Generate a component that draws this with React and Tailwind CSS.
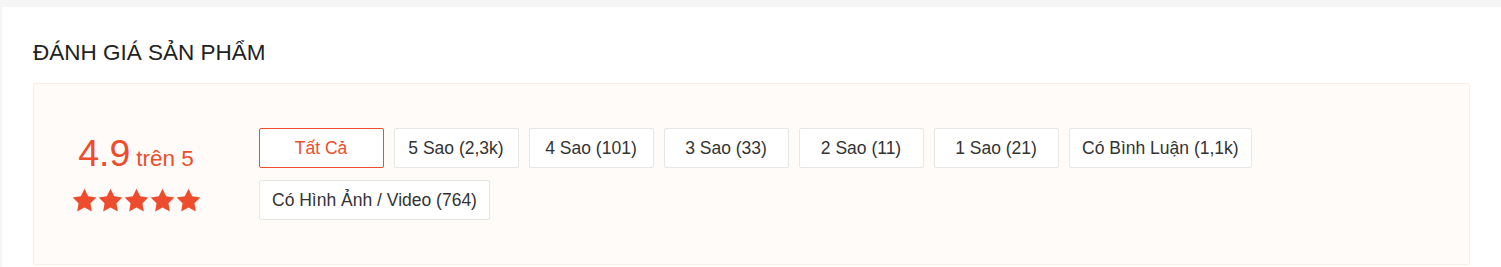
import React from 'react'

const filters = [
  { label: 'Tất Cả', active: true },
  { label: '5 Sao (2,3k)' },
  { label: '4 Sao (101)' },
  { label: '3 Sao (33)' },
  { label: '2 Sao (11)' },
  { label: '1 Sao (21)' },
  { label: 'Có Bình Luận (1,1k)' },
  { label: 'Có Hình Ảnh / Video (764)' },
]

function Star() {
  return (
    <svg viewBox="0 0 24 24" className="w-[25px] h-[25px] block" fill="#ee4d2d">
      <polygon points="12 0.8 15.53 7.95 23.41 9.09 17.71 14.65 19.05 22.51 12 18.8 4.95 22.51 6.29 14.65 0.59 9.09 8.47 7.95" />
    </svg>
  )
}

function App() {
  return (
    <div className="h-[267px] overflow-hidden bg-[#f5f5f5] pt-[7px] pl-[2px] font-['Liberation_Sans',Arial,sans-serif]">
      <div className="bg-white h-[400px] px-[31px] pt-[33px]">
        <div className="text-[22.5px] leading-[26px] text-[#222] uppercase">ĐÁNH GIÁ SẢN PHẨM</div>

        <div className="mt-[17px] flex items-center bg-[#fffbf8] border border-[#f9ede5] rounded-[2px] px-[37.5px] py-[37.5px]">
          <div className="w-[129px] mr-[58px] shrink-0 flex flex-col items-center text-[#ee4d2d]">
            <div className="whitespace-nowrap leading-none">
              <span className="text-[37.5px]">4.9</span>
              <span className="text-[22.5px] ml-[6px]">trên 5</span>
            </div>
            <div className="flex gap-[1px] mt-[15px]">
              <Star />
              <Star />
              <Star />
              <Star />
              <Star />
            </div>
          </div>

          <div className="flex flex-wrap flex-1">
            {filters.map((f) => (
              <div
                key={f.label}
                className={
                  f.active
                    ? 'min-w-[125px] h-[40px] px-[12.5px] mt-[6.25px] mb-[6.25px] mr-[10px] flex items-center justify-center bg-white border border-[#ee4d2d] rounded-[2px] text-[17.5px] text-[#ee4d2d] whitespace-nowrap'
                    : 'min-w-[125px] h-[40px] px-[12.5px] mt-[6.25px] mb-[6.25px] mr-[10px] flex items-center justify-center bg-white border border-[#e8e6e5] rounded-[2px] text-[17.5px] text-[#333] whitespace-nowrap'
                }
              >
                {f.label}
              </div>
            ))}
          </div>
        </div>
      </div>
    </div>
  )
}

export default App
